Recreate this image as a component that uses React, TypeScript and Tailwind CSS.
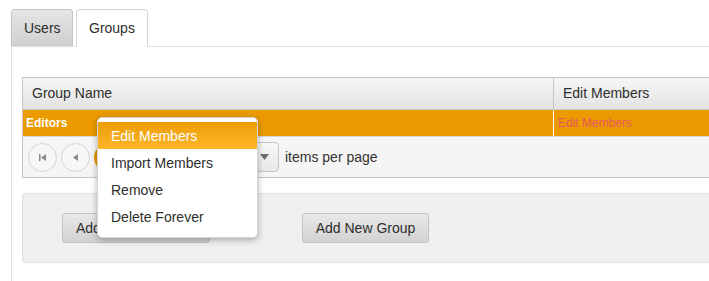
export default function App() {
  return (
    <div className="relative w-[709px] h-[281px] overflow-hidden bg-white pl-[11px] pt-[8px] font-['Liberation_Sans',Arial,sans-serif] text-[14px] text-[#2e2e2e]">
      {/* tabs */}
      <div className="flex items-end gap-[3px] h-[38px]">
        <div className="w-[62px] h-[37px] rounded-t-[4px] border border-[#c5c5c5] border-b-0 bg-gradient-to-b from-[#e6e6e6] to-[#cfcfcf] flex items-center pl-[12px]">
          Users
        </div>
        <div className="relative z-10 -mb-px w-[72px] h-[38px] rounded-t-[4px] border border-[#d5d5d5] border-b-0 bg-white flex items-center pl-[12px]">
          Groups
        </div>
      </div>

      {/* tab content */}
      <div className="border-l border-t border-[#e0e0e0] pl-[10px] pt-[30px] h-[240px]">
        {/* grid */}
        <div className="w-[720px] border border-[#c5c5c5]">
          <div className="flex h-[32px] border-b border-[#c5c5c5] bg-gradient-to-b from-[#f6f6f6] to-[#e3e3e3]">
            <div className="w-[531px] border-r border-[#c5c5c5] flex items-center pl-[9px]">Group Name</div>
            <div className="flex-1 flex items-center pl-[9px]">Edit Members</div>
          </div>
          <div className="flex h-[27px] border-b border-[#d5d5d5] bg-[#eb9a00] text-[12px]">
            <div className="w-[531px] border-r border-white flex items-center pl-[3px] font-bold text-white">Editors</div>
            <div className="flex-1 flex items-center pl-[4px] text-[#e8585c]">Edit Members</div>
          </div>
          <div className="flex items-center h-[40px] bg-[#f5f5f5] pl-[5px] gap-[4px]">
            <div className="w-[29px] h-[29px] rounded-full border border-[#d5d5d5] bg-[#f7f7f7] flex items-center justify-center">
              <svg width="9" height="9" viewBox="0 0 9 9">
                <rect x="1" y="1" width="1.5" height="7" fill="#8a8a8a" />
                <polygon points="8,1 8,8 3,4.5" fill="#8a8a8a" />
              </svg>
            </div>
            <div className="w-[29px] h-[29px] rounded-full border border-[#d5d5d5] bg-[#f7f7f7] flex items-center justify-center">
              <svg width="9" height="9" viewBox="0 0 9 9">
                <polygon points="7,1 7,8 2,4.5" fill="#8a8a8a" />
              </svg>
            </div>
            <div className="w-[29px] h-[29px] rounded-full bg-[#eb9a00] text-white flex items-center justify-center">1</div>
            <div className="w-[29px] h-[29px] rounded-full border border-[#d5d5d5] bg-[#f7f7f7]" />
            <div className="w-[29px] h-[29px] rounded-full border border-[#d5d5d5] bg-[#f7f7f7]" />
            <div className="ml-[6px] w-[80px] h-[30px] rounded-[4px] border border-[#c5c5c5] bg-gradient-to-b from-[#f8f8f8] to-[#e8e8e8] flex items-center justify-end pr-[9px]">
              <svg width="9" height="6" viewBox="0 0 9 6">
                <polygon points="0,0 9,0 4.5,6" fill="#6d6d6d" />
              </svg>
            </div>
            <div className="ml-[2px] text-[#333]">items per page</div>
          </div>
        </div>

        {/* toolbar panel */}
        <div className="mt-[15px] w-[720px] h-[70px] rounded-[3px] border border-[#e0e0e0] bg-[#efefef] pl-[39px] pt-[19px] flex items-start gap-[92px]">
          <button className="w-[148px] h-[30px] rounded-[3px] border border-[#c5c5c5] bg-gradient-to-b from-[#e9e9e9] to-[#d2d2d2] text-left pl-[13px] text-[#2e2e2e]">
            Add Existing Group
          </button>
          <button className="w-[127px] h-[30px] rounded-[3px] border border-[#c5c5c5] bg-gradient-to-b from-[#e9e9e9] to-[#d2d2d2] text-[#2e2e2e]">
            Add New Group
          </button>
        </div>
      </div>

      {/* context menu */}
      <div className="absolute left-[97px] top-[117px] w-[161px] h-[121px] rounded-[5px] border border-[#d5d5d5] bg-white pt-[4px] shadow-[0_2px_6px_rgba(0,0,0,0.3)]">
        <div className="h-[27px] flex items-center pl-[13px] pt-px text-white bg-gradient-to-b from-[#ed9d00] to-[#fdb528]">Edit Members</div>
        <div className="h-[27px] flex items-center pl-[13px] pt-px">Import Members</div>
        <div className="h-[27px] flex items-center pl-[13px] pt-px">Remove</div>
        <div className="h-[27px] flex items-center pl-[13px] pt-px">Delete Forever</div>
      </div>
    </div>
  );
}
